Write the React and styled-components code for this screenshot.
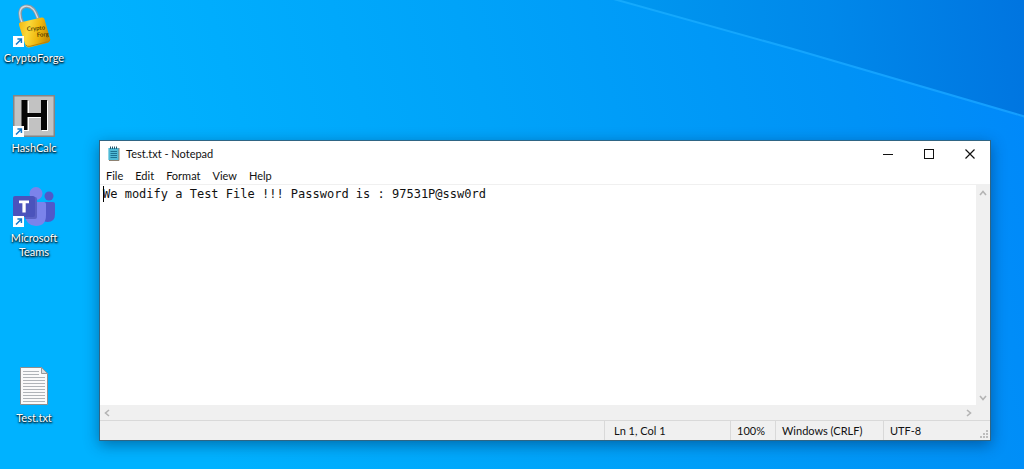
import React, { useState } from 'react';
import styled, { createGlobalStyle } from 'styled-components';

const color = {
  white: '#ffffff',
  chrome: '#f0f0f0',
  line: '#d9d9d9',
  text: '#111111',
  arrow: '#b4b4b4',
  border: '#2f6584',
};

const GlobalStyle = createGlobalStyle`
  * {
    box-sizing: border-box;
  }

  body {
    margin: 0;
    overflow: hidden;
    font-family: Lato, 'Open Sans', sans-serif;
    font-size: 11px;
    line-height: 14px;
    color: ${color.text};
  }

  button {
    padding: 0;
    border: 0;
    background: none;
    font: inherit;
    color: inherit;
  }
`

// small white tile with the blue arrow, bottom left of a shortcut
const ShortcutArrow = () => (
  <g>
    <rect x="1" y="32" width="11" height="11" fill="#fff" />
    <path d="M4 40.500L8.800 35.700M5.400 35H9.400V39" fill="none" stroke="#1479c9" strokeWidth="1.500" />
  </g>
);

const CryptoForgeIcon = () => (
  <svg width="44" height="44" viewBox="0 0 44 44" aria-hidden="true">
    <defs>
      <linearGradient id="lockBody" x1="0" y1="0" x2="1" y2="0.200">
        <stop offset="0" stopColor="#f2b40c" />
        <stop offset="0.350" stopColor="#fbd83a" />
        <stop offset="0.700" stopColor="#efb70c" />
        <stop offset="1" stopColor="#c98f06" />
      </linearGradient>
    </defs>
    <path d="M10.500 19.500C6.500 10 7.500 3.800 13 2.500C19.500 1 23.500 6 26.200 14.500" fill="none" stroke="#8b98a3" strokeWidth="3.600" />
    <path d="M10 18.500C6.300 10 7.300 3.600 13 2.300C19 1 23 6 25.700 14" fill="none" stroke="#d3dce2" strokeWidth="1.400" />
    <path d="M8 18.600L29.500 13.500Q32 13 32.600 15.500L38 34.500Q38.600 37.500 36 38.700L18 43.300Q15 44 13.500 41.500L7 21Q6.600 19 8 18.600Z" fill="url(#lockBody)" />
    <path d="M13.500 40.700Q15 43 18 42.300L36 37.700Q37.600 37 37.800 35.500" fill="none" stroke="#b98005" strokeWidth="1" />
    <text x="15" y="27" fontSize="6" fontWeight="600" fill="#443400" transform="rotate(-5 15 27)">Crypto</text>
    <text x="25" y="33" fontSize="6" fontWeight="600" fill="#443400" transform="rotate(-5 25 33)">Forg</text>
    <ShortcutArrow />
  </svg>
);

const HashCalcIcon = () => (
  <svg width="44" height="44" viewBox="0 0 44 44" aria-hidden="true">
    <rect x="1" y="1" width="42" height="42" fill="#858585" />
    <rect x="2.500" y="2.500" width="39" height="39" fill="#c2c2c2" />
    <path d="M11 7H17V20H30V7H36V37H30V24H17V37H11Z" fill="#fff" />
    <path d="M9.500 6H15.500V19H29V6H35V36H29V23H15.500V36H9.500Z" fill="#050505" />
    <ShortcutArrow />
  </svg>
);

const TeamsIcon = () => (
  <svg width="44" height="44" viewBox="0 0 44 44" aria-hidden="true">
    <circle cx="37" cy="12" r="4.500" fill="#5059c9" />
    <path d="M31 18H41Q43 18 43 20V30Q43 38 35.500 38Q32 38 30 36Z" fill="#5059c9" />
    <circle cx="24" cy="9.500" r="6.500" fill="#7b83eb" />
    <path d="M16 18H32Q34 18 34 20V31Q34 42 24 42Q14 42 13 31V18Z" fill="#7b83eb" />
    <path d="M17 13H23Q25 13 25 15V33Q25 35 23 35H13V18Z" fill="#5a61c4" />
    <rect x="1" y="12" width="22" height="21" rx="2" fill="#4b53bc" />
    <path d="M7 16.500H17V19.300H13.700V28.500H10.400V19.300H7Z" fill="#fff" />
    <ShortcutArrow />
  </svg>
);

const TextFileIcon = () => (
  <svg width="44" height="44" viewBox="0 0 44 44" aria-hidden="true">
    <path d="M8.500 3.500H29.500L35.500 9.500V40.500H8.500Z" fill="#fafafa" stroke="#8e8e8e" />
    <path d="M29.500 3.500V9.500H35.500Z" fill="#d9dde0" stroke="#999" />
    <path d="M11 7.500H27M11 10.500H27M11 13.500H33M11 16.500H33M11 19.500H33M11 22.500H33M11 25.500H33M11 28.500H33M11 31.500H33M11 34.500H33M11 37.500H33" stroke="#b0b4b8" />
  </svg>
);

const NotepadIcon = () => (
  <svg width="12" height="16" viewBox="0 0 12 16" aria-hidden="true">
    <path d="M1 2H11V14L10 15H1Z" fill="#4fb9d6" />
    <path d="M11 2V14.500H1" fill="none" stroke="#8e8272" />
    <path d="M0.500 2V14" stroke="#8fd5e6" />
    <path d="M2.500 0.500V3M4.500 0.500V3M6.500 0.500V3M8.500 0.500V3" stroke="#27566b" />
    <path d="M2.500 5.500H9M2.500 7.500H9M2.500 9.500H9M2.500 11.500H9" stroke="#1c7191" />
  </svg>
);

const Chevron = ({ d }) => (
  <svg width="8" height="8" viewBox="0 0 8 8" aria-hidden="true">
    <path d={d} fill="none" stroke={color.arrow} strokeWidth="1.600" />
  </svg>
);

const shortcuts = [
  { name: 'CryptoForge', Icon: CryptoForgeIcon, row: 1 },
  { name: 'HashCalc', Icon: HashCalcIcon, row: 2 },
  { name: 'Microsoft Teams', Icon: TeamsIcon, row: 3 },
  { name: 'Test.txt', Icon: TextFileIcon, row: 5 },
];

const menus = ['File', 'Edit', 'Format', 'View', 'Help'];

const Notepad = () => {
  const [content, setContent] = useState('We modify a Test File !!! Password is : 97531P@ssw0rd');

  return (
    <Window aria-label="Notepad">
      <TitleBar>
        <NotepadIcon />
        <Title>Test.txt - Notepad</Title>
        <WindowBtn aria-label="Minimize">
          <svg width="10" height="10"><path d="M0 5.500H10" stroke="#111" /></svg>
        </WindowBtn>
        <WindowBtn aria-label="Maximize">
          <svg width="10" height="10"><rect x="0.500" y="0.500" width="9" height="9" fill="none" stroke="#111" /></svg>
        </WindowBtn>
        <WindowBtn aria-label="Close">
          <svg width="10" height="10"><path d="M0.500 0.500L9.500 9.500M9.500 0.500L0.500 9.500" stroke="#111" strokeWidth="1.200" /></svg>
        </WindowBtn>
      </TitleBar>

      <MenuBar>
        {menus.map(menu => <button key={menu}>{menu}</button>)}
      </MenuBar>

      <Editor>
        <Page>
          <TextBox
            aria-label="Text editor"
            spellCheck={false}
            value={content}
            onChange={e => setContent(e.target.value)}
          />
          <Caret />
        </Page>
        <ScrollBar $vertical>
          <ScrollBtn aria-label="Scroll up"><Chevron d="M1 6L4 2.500L7 6" /></ScrollBtn>
          <ScrollBtn aria-label="Scroll down"><Chevron d="M1 2L4 5.500L7 2" /></ScrollBtn>
        </ScrollBar>
        <ScrollBar>
          <ScrollBtn aria-label="Scroll left"><Chevron d="M6 1L2.500 4L6 7" /></ScrollBtn>
          <ScrollBtn aria-label="Scroll right"><Chevron d="M2 1L5.500 4L2 7" /></ScrollBtn>
        </ScrollBar>
      </Editor>

      <StatusBar>
        <Status $width={126}>Ln 1, Col 1</Status>
        <Status $width={45} $tight>100%</Status>
        <Status $width={108} $tight>Windows (CRLF)</Status>
        <Status $width={107} $tight>UTF-8</Status>
        <Grip width="10" height="10" aria-hidden="true">
          <path d="M7 1H9M4 4H6M7 4H9M1 7H3M4 7H6M7 7H9" stroke="#bdbdbd" strokeWidth="2" />
        </Grip>
      </StatusBar>
    </Window>
  );
};

const App = () => (
  <Desktop>
    <GlobalStyle />
    <Wallpaper viewBox="0 0 1024 469" preserveAspectRatio="none" aria-hidden="true">
      <defs>
        <linearGradient id="sky" gradientUnits="userSpaceOnUse" x1="200" y1="420" x2="1060" y2="180">
          <stop offset="0" stopColor="#00b2ff" />
          <stop offset="0.400" stopColor="#00a3f9" />
          <stop offset="0.800" stopColor="#0092f6" />
          <stop offset="1" stopColor="#0088fa" />
        </linearGradient>
        <linearGradient id="shade" gradientUnits="userSpaceOnUse" x1="620" y1="50" x2="1040" y2="0">
          <stop offset="0" stopColor="#0098f0" />
          <stop offset="0.500" stopColor="#0088ea" />
          <stop offset="1" stopColor="#0073df" />
        </linearGradient>
        <linearGradient id="beam" x1="0" y1="0" x2="1" y2="0">
          <stop offset="0" stopColor="#14aafc" />
          <stop offset="1" stopColor="#149eff" />
        </linearGradient>
      </defs>
      <rect width="1024" height="469" fill="url(#sky)" />
      <path d="M615 0L793 49L1024 117V0Z" fill="url(#shade)" />
      <path d="M610 -2L793 49L1026 117" fill="none" stroke="url(#beam)" strokeWidth="2" />
    </Wallpaper>

    <IconGrid>
      {shortcuts.map(({ name, Icon, row }) => (
        <Shortcut key={name} $row={row}>
          <Icon />
          <ShortcutName>{name}</ShortcutName>
        </Shortcut>
      ))}
    </IconGrid>

    <Notepad />
  </Desktop>
);

const Desktop = styled.main`
  position: relative;
  display: flex;
  min-height: 100vh;
`

const Wallpaper = styled.svg`
  position: absolute;
  inset: 0;
  width: 100%;
  height: 100%;
`

const IconGrid = styled.nav`
  position: relative;
  flex: none;
  display: grid;
  grid-template-columns: 68px;
  grid-auto-rows: 90px;
  padding-top: 4px;
`

const Shortcut = styled.button`
  grid-row: ${({ $row }) => $row};
  display: flex;
  flex-direction: column;
  align-items: center;
  gap: 3px;
`

const ShortcutName = styled.span`
  max-width: 64px;
  color: ${color.white};
  text-align: center;
  text-shadow: 0 1px 2px #000, 1px 1px 2px rgba(0, 0, 0, 0.8);
`

const Window = styled.section`
  position: relative;
  flex: 1;
  min-width: 0;
  display: flex;
  flex-direction: column;
  margin: 140px 33px 28px 31px;
  border: 1px solid ${color.border};
  background: ${color.white};
  box-shadow: 0 4px 14px rgba(0, 30, 70, 0.45);
`

const TitleBar = styled.header`
  height: 26px;
  display: flex;
  align-items: center;
  padding-left: 8px;
`

const Title = styled.span`
  flex: 1;
  padding-left: 6px;
`

const WindowBtn = styled.button`
  width: 41px;
  height: 26px;
  display: flex;
  align-items: center;
  justify-content: center;
`

const MenuBar = styled.nav`
  height: 18px;
  display: flex;
  align-items: center;
  gap: 12px;
  padding-left: 6px;
  border-bottom: 1px solid ${color.chrome};
`

const Editor = styled.div`
  flex: 1;
  display: grid;
  grid-template-columns: 1fr 14px;
  grid-template-rows: 1fr 15px;
  background: ${color.chrome};
`

const Page = styled.div`
  position: relative;
  display: flex;
`

const TextBox = styled.textarea`
  flex: 1;
  min-width: 0;
  padding: 2px 3px;
  border: 0;
  outline: 0;
  resize: none;
  overflow: hidden;
  white-space: pre;
  background: ${color.white};
  color: ${color.text};
  font-family: 'DejaVu Sans Mono', 'Liberation Mono', monospace;
  font-size: 12px;
  line-height: 15px;
`

const Caret = styled.span`
  position: absolute;
  left: 3px;
  top: 1px;
  width: 1px;
  height: 16px;
  background: #000;
`

const ScrollBar = styled.div`
  display: flex;
  flex-direction: ${({ $vertical }) => ($vertical ? 'column' : 'row')};
  justify-content: space-between;
`

const ScrollBtn = styled.button`
  width: 14px;
  height: 15px;
  display: flex;
  align-items: center;
  justify-content: center;
`

const StatusBar = styled.footer`
  position: relative;
  height: 20px;
  display: flex;
  justify-content: flex-end;
  border-top: 1px solid ${color.line};
  background: ${color.chrome};
`

const Status = styled.span`
  width: ${({ $width }) => $width}px;
  display: flex;
  align-items: center;
  padding-left: ${({ $tight }) => ($tight ? 6 : 9)}px;
  border-left: 1px solid ${color.line};
`

const Grip = styled.svg`
  position: absolute;
  right: 1px;
  bottom: 0;
`

export default App;
